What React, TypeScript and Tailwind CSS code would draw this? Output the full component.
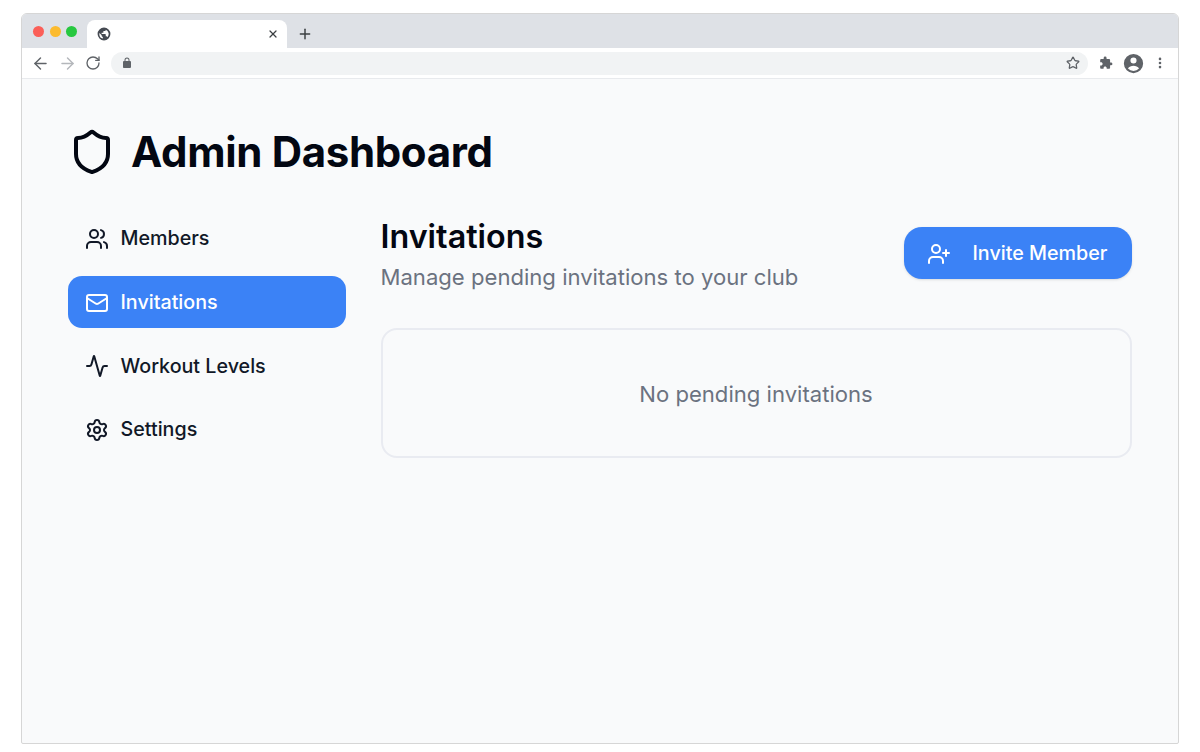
import { ArrowLeft, ArrowRight, RotateCw, Star, EllipsisVertical, X, Plus, Shield, Users, Mail, Activity, Settings, UserPlus } from "lucide-react"

const navItems = [
  { label: "Members", icon: Users },
  { label: "Invitations", icon: Mail, active: true },
  { label: "Workout Levels", icon: Activity },
  { label: "Settings", icon: Settings },
]

function BrowserChrome() {
  return (
    <div className="shrink-0">
      <div className="flex h-[34px] bg-[#dee1e6] pt-[6px]">
        <div className="flex h-7 w-[65px] items-center gap-[5.5px] pb-[6px] pl-[11px]">
          <span className="size-[11px] rounded-full bg-[#fb5f58]" />
          <span className="size-[11px] rounded-full bg-[#fcbb2e]" />
          <span className="size-[11px] rounded-full bg-[#27c840]" />
        </div>
        <div className="flex h-7 w-[200px] items-center justify-between rounded-t-lg bg-white pr-[8px] pl-[10px]">
          <svg viewBox="0 0 24 24" className="size-[14px] text-[#454a52]" fill="currentColor">
            <path d="M12 1a11 11 0 1 0 0 22 11 11 0 0 0 0-22zM4 12c0-.7.1-1.300.2-1.900L8 14v1c0 1.100.9 2 2 2v2.900A8 8 0 0 1 4 12zm13.900 5.400c-.3-.8-1-1.400-1.900-1.400h-1v-3c0-.6-.4-1-1-1H8v-2h2c.6 0 1-.4 1-1V7h2c1.100 0 2-.9 2-2v-.4a8 8 0 0 1 2.900 12.800z" />
          </svg>
          <X className="size-[12px] text-[#3c4043]" strokeWidth={2.5} />
        </div>
        <div className="flex h-7 w-9 items-center justify-center">
          <Plus className="size-[16px] text-[#3c4043]" strokeWidth={2.2} />
        </div>
      </div>
      <div className="flex h-[30px] items-center bg-white pl-[9px]">
        <ArrowLeft className="size-[19px] text-[#5f6368]" strokeWidth={1.8} />
        <ArrowRight className="ml-[8px] size-[19px] text-[#b4b7bb]" strokeWidth={1.8} />
        <RotateCw className="ml-[8px] size-[16px] text-[#5f6368]" strokeWidth={2} />
        <div className="ml-[10px] flex h-[23px] flex-1 items-center justify-between rounded-full bg-[#f1f3f4] pr-[8px] pl-[10px]">
          <svg viewBox="0 0 24 24" className="size-[12px] text-[#5f6368]" fill="currentColor">
            <path d="M18 8h-1V6A5 5 0 0 0 7 6v2H6a2 2 0 0 0-2 2v10c0 1.100.9 2 2 2h12a2 2 0 0 0 2-2V10a2 2 0 0 0-2-2zM9 6a3 3 0 0 1 6 0v2H9V6z" />
          </svg>
          <Star className="size-[14px] text-[#5f6368]" strokeWidth={2.2} />
        </div>
        <div className="flex w-[90px] items-center pl-[11px]">
          <svg viewBox="0 0 24 24" className="size-[14px] text-[#5f6368]" fill="currentColor">
            <path d="M20.500 11H19V7c0-1.100-.9-2-2-2h-4V3.500a2.500 2.500 0 0 0-5 0V5H4c-1.100 0-1.990.9-1.990 2v3.800H3.500c1.490 0 2.700 1.210 2.700 2.700s-1.210 2.700-2.700 2.700H2V20c0 1.100.9 2 2 2h3.800v-1.500c0-1.490 1.210-2.700 2.700-2.700 1.490 0 2.700 1.210 2.700 2.700V22H17c1.100 0 2-.9 2-2v-4h1.500a2.500 2.500 0 0 0 0-5z" />
          </svg>
          <svg viewBox="0 0 24 24" className="ml-[10px] size-[21px] text-[#5f6368]" fill="currentColor">
            <path d="M12 1a11 11 0 1 0 0 22 11 11 0 0 0 0-22zm0 4a3.500 3.500 0 1 1 0 7 3.500 3.500 0 0 1 0-7zm0 15.500a8.500 8.500 0 0 1-6.300-2.800c1-2 4-3.200 6.300-3.200s5.300 1.200 6.300 3.200a8.500 8.500 0 0 1-6.300 2.800z" />
          </svg>
          <EllipsisVertical className="ml-[9px] size-[14px] text-[#5f6368]" strokeWidth={2.5} />
        </div>
      </div>
      <div className="h-px bg-[#e8eaed]" />
    </div>
  )
}

export default function App() {
  return (
    <div className="h-[752px] w-[1200px] bg-white pt-[13px] pr-[21px] pb-2 pl-[21px] font-['Inter',sans-serif]">
      <div className="flex h-[731px] flex-col overflow-hidden rounded-t-[6px] rounded-b-[2px] border border-[#d6d6d6] bg-[#f9fafb]">
        <BrowserChrome />
        <main className="px-[46px] pt-[43px]">
          <header className="flex h-[60px] items-center gap-[15px]">
            <Shield className="-mt-px size-12 text-[#030712]" strokeWidth={2} />
            <h1 className="text-[42px] leading-[60px] font-bold tracking-[-0.008em] text-[#030712]">Admin Dashboard</h1>
          </header>
          <div className="mt-[30px] flex">
            <nav className="flex w-[278px] shrink-0 flex-col gap-[11.67px]">
              {navItems.map((item) => (
                <a
                  key={item.label}
                  href="#"
                  className={`flex h-[52px] items-center gap-[11.5px] rounded-[14px] pt-[2px] pl-[17px] text-[19.7px] font-medium ${
                    item.active ? "bg-[#3b82f6] text-white" : "text-[#111827]"
                  }`}
                >
                  <item.icon className="size-6" strokeWidth={2} />
                  {item.label}
                </a>
              ))}
            </nav>
            <section className="ml-[34.500px] w-[751px]">
              <div className="flex items-start justify-between">
                <div>
                  <h2 className="mt-[5px] text-[32.3px] leading-[40px] font-semibold text-[#030712]">Invitations</h2>
                  <p className="mt-[4px] text-[22.1px] leading-[32px] text-[#6b7280]">Manage pending invitations to your club</p>
                </div>
                <button className="mt-[15px] flex h-[52px] w-[228px] items-center rounded-[18px] bg-[#3b82f6] pt-[2px] pl-[23px] text-[19.7px] font-medium text-white shadow-sm">
                  <UserPlus className="size-6" strokeWidth={2} />
                  <span className="ml-[22px]">Invite Member</span>
                </button>
              </div>
              <div className="mt-[35px] flex h-[130px] items-center justify-center rounded-[16px] border-2 border-[#e9ebf1] pt-[3px] text-[22.1px] text-[#6b7280]">
                No pending invitations
              </div>
            </section>
          </div>
        </main>
      </div>
    </div>
  )
}
